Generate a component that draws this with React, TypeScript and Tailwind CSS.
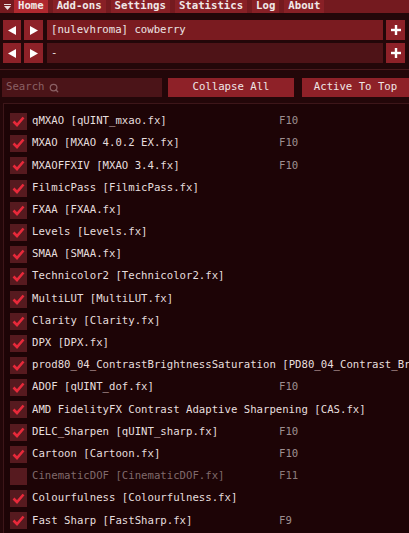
import { Search } from 'lucide-react'

type Effect = {
  name: string
  file: string
  on: boolean
  key?: string
}

const effects: Effect[] = [
  { name: 'qMXAO', file: 'qUINT_mxao.fx', on: true, key: 'F10' },
  { name: 'MXAO', file: 'MXAO 4.0.2 EX.fx', on: true, key: 'F10' },
  { name: 'MXAOFFXIV', file: 'MXAO 3.4.fx', on: true, key: 'F10' },
  { name: 'FilmicPass', file: 'FilmicPass.fx', on: true },
  { name: 'FXAA', file: 'FXAA.fx', on: true },
  { name: 'Levels', file: 'Levels.fx', on: true },
  { name: 'SMAA', file: 'SMAA.fx', on: true },
  { name: 'Technicolor2', file: 'Technicolor2.fx', on: true },
  { name: 'MultiLUT', file: 'MultiLUT.fx', on: true },
  { name: 'Clarity', file: 'Clarity.fx', on: true },
  { name: 'DPX', file: 'DPX.fx', on: true },
  { name: 'prod80_04_ContrastBrightnessSaturation', file: 'PD80_04_Contrast_Brightness_Saturation.fx', on: true },
  { name: 'ADOF', file: 'qUINT_dof.fx', on: true, key: 'F10' },
  { name: 'AMD FidelityFX Contrast Adaptive Sharpening', file: 'CAS.fx', on: true },
  { name: 'DELC_Sharpen', file: 'qUINT_sharp.fx', on: true, key: 'F10' },
  { name: 'Cartoon', file: 'Cartoon.fx', on: true, key: 'F10' },
  { name: 'CinematicDOF', file: 'CinematicDOF.fx', on: false, key: 'F11' },
  { name: 'Colourfulness', file: 'Colourfulness.fx', on: true },
  { name: 'Fast Sharp', file: 'FastSharp.fx', on: true, key: 'F9' },
]

const tabs = ['Home', 'Add-ons', 'Settings', 'Statistics', 'Log', 'About']

function Arrow({ dir }: { dir: 'left' | 'right' }) {
  return (
    <svg width="8" height="9" viewBox="0 0 8 9" className="fill-white">
      {dir === 'left' ? <path d="M0 4.5 L8 0 L8 9 Z" /> : <path d="M8 4.5 L0 0 L0 9 Z" />}
    </svg>
  )
}

function Plus() {
  return (
    <svg width="10" height="10" viewBox="0 0 10 10" className="fill-white">
      <rect x="3.8" y="0" width="2.4" height="10" />
      <rect x="0" y="3.8" width="10" height="2.4" />
    </svg>
  )
}

function PresetRow({ value, dark }: { value: string; dark?: boolean }) {
  return (
    <div className="flex h-[20px] gap-[3px] pl-[3px] pr-[4px]">
      <button className="w-[18px] bg-[#8e2128] flex items-center justify-center">
        <Arrow dir="left" />
      </button>
      <button className="w-[19px] bg-[#8e2128] flex items-center justify-center">
        <Arrow dir="right" />
      </button>
      <div
        className={`flex-1 ml-[1px] flex items-center px-[4px] text-[#ece4e4] ${dark ? 'bg-[#4e1317]' : 'bg-[#7a1b20]'}`}
      >
        {value}
      </div>
      <button className="w-[19px] bg-[#8e2128] flex items-center justify-center">
        <Plus />
      </button>
    </div>
  )
}

function Checkbox({ on }: { on: boolean }) {
  return (
    <div className="w-[17px] h-[17px] shrink-0 bg-[#561a1f] flex items-center justify-center">
      {on && (
        <svg width="13" height="11" viewBox="0 0 13 11">
          <path d="M1.5 5.5 L5 9 L11.5 1.5" fill="none" stroke="#e8293a" strokeWidth="2.6" />
        </svg>
      )}
    </div>
  )
}

export default function App() {
  return (
    <div
      className="w-[409px] h-[533px] overflow-hidden bg-[#230709] text-[10.67px] leading-none"
      style={{ fontFamily: '"DejaVu Sans Mono", "Liberation Mono", monospace' }}
    >
      {/* Menu bar */}
      <div className="h-[13px] bg-[#741a1f] flex items-stretch">
        <div className="w-[14px] flex items-center justify-center">
          <svg width="7" height="6" viewBox="0 0 7 6" className="fill-[#e9dede]">
            <rect x="0" y="0" width="7" height="1" />
            <path d="M0 2 L7 2 L3.5 6 Z" />
          </svg>
        </div>
        <div className="flex gap-[5px]">
          {tabs.map((tab) => (
            <div
              key={tab}
              className={`px-[4px] flex items-center font-bold text-[#f1e8e8] ${tab === 'Home' ? 'bg-[#b0282f]' : 'bg-[#882026]'}`}
            >
              {tab}
            </div>
          ))}
        </div>
      </div>

      {/* Preset selection */}
      <div className="flex flex-col gap-[3px] pt-[7px]">
        <PresetRow value="[nulevhroma] cowberry" />
        <PresetRow value="-" dark />
      </div>

      <div className="mt-[6px] h-[1px] bg-[#4a1a1d]" />

      {/* Search and list actions */}
      <div className="flex h-[19px] mt-[8px] pl-[2px]">
        <div className="w-[160px] bg-[#4b1418] flex items-center gap-[4px] px-[4px] text-[#8a6064]">
          Search
          <Search className="w-[10px] h-[10px]" strokeWidth={3} />
        </div>
        <button className="ml-[6px] w-[126px] bg-[#8e2128] text-[#efe6e6]">Collapse All</button>
        <button className="ml-[8px] flex-1 bg-[#8e2128] text-[#efe6e6] whitespace-nowrap">Active To Top</button>
      </div>

      {/* Effect list */}
      <div className="mt-[6px] ml-[3px] h-full overflow-hidden border-t border-l border-[#3d1619] bg-[#1d0406] pt-[9px]">
        <div className="flex flex-col gap-[5.2px]">
          {effects.map((fx) => (
            <div key={fx.name} className="flex items-center h-[17px] pl-[6px] whitespace-nowrap">
              <Checkbox on={fx.on} />
              <span className={`ml-[5px] w-[247px] shrink-0 overflow-visible ${fx.on ? 'text-[#e6dede]' : 'text-[#806a6b]'}`}>
                {fx.name} [{fx.file}]
              </span>
              {fx.key && (
                <span className={fx.on ? 'text-[#9d8f90]' : 'text-[#8a7a7b]'}>{fx.key}</span>
              )}
            </div>
          ))}
        </div>
      </div>
    </div>
  )
}
